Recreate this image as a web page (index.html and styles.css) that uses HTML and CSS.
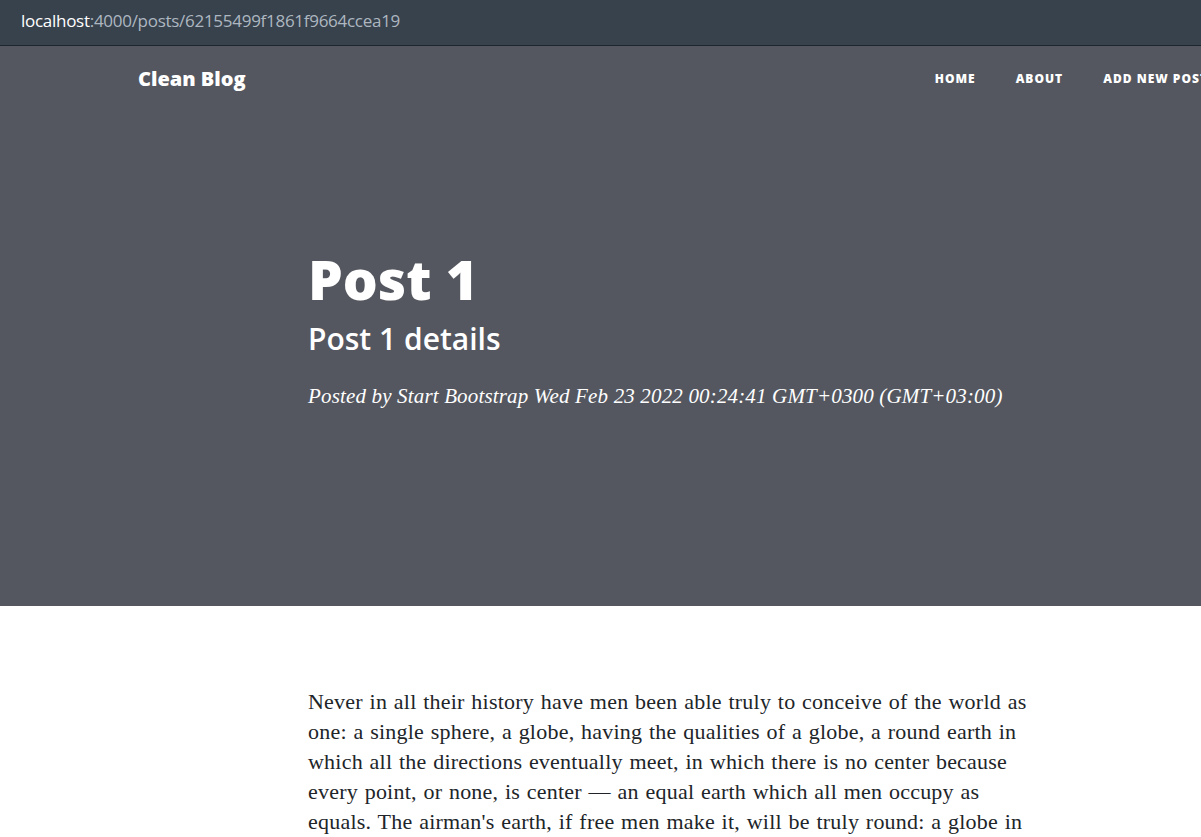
FILE: index.html
```html
<!DOCTYPE html>
<html lang="en">
<head>
<meta charset="utf-8">
<title>Post 1 - Clean Blog</title>
<link rel="stylesheet" href="styles.css">
</head>
<body>
<div class="page">
  <div class="addressbar">
    <span class="host">localhost</span><span class="path">:4000/posts/62155499f1861f9664ccea19</span>
  </div>
  <header class="masthead">
    <nav class="navbar">
      <a class="brand" href="#">Clean Blog</a>
      <ul class="nav-list">
        <li><a class="nav-link" href="#">Home</a></li>
        <li><a class="nav-link" href="#">About</a></li>
        <li><a class="nav-link" href="#">Add New Post</a></li>
      </ul>
    </nav>
    <div class="post-heading">
      <h1>Post 1</h1>
      <h2 class="subheading">Post 1 details</h2>
      <span class="meta">Posted by Start Bootstrap Wed Feb 23 2022 00:24:41 GMT+0300 (GMT+03:00)</span>
    </div>
  </header>
  <article class="article">
    <p>Never in all their history have men been able truly to conceive of the world as one: a single sphere, a globe, having the qualities of a globe, a round earth in which all the directions eventually meet, in which there is no center because every point, or none, is center — an equal earth which all men occupy as equals. The airman's earth, if free men make it, will be truly round: a globe in practice, not in theory.</p>
  </article>
</div>
</body>
</html>
```

FILE: styles.css
```css
html, body {
  margin: 0;
  padding: 0;
  background: #ffffff;
}

.page {
  width: 1201px;
  overflow: hidden;
  min-height: 837px;
}

.addressbar {
  background: #37424d;
  border-bottom: 1px solid #1d252e;
  box-sizing: border-box;
  height: 46px;
  padding-left: 21px;
  font-family: "Open Sans", "Noto Sans", sans-serif;
  font-size: 17px;
  line-height: 41px;
  letter-spacing: -0.28px;
}

.host {
  color: #ffffff;
}

.path {
  color: #aeb7c0;
}

.masthead {
  background: #54575f;
  height: 560px;
  color: #ffffff;
}

.navbar {
  display: flex;
  align-items: center;
  justify-content: space-between;
  width: 1090px;
  height: 64px;
  margin-left: 138px;
  margin-bottom: 2px;
}

.brand {
  color: #ffffff;
  text-decoration: none;
  font-family: "Open Sans", sans-serif;
  font-weight: 800;
  font-size: 20px;
}

.nav-list {
  display: flex;
  list-style: none;
  margin: 0;
  padding: 0;
}

.nav-link {
  display: block;
  padding: 0 20px;
  color: #ffffff;
  text-decoration: none;
  text-transform: uppercase;
  font-family: "Open Sans", sans-serif;
  font-weight: 800;
  font-size: 12px;
  letter-spacing: 1px;
}

.post-heading {
  margin-left: 308px;
  padding-top: 134px;
}

.post-heading h1 {
  margin: 0;
  font-family: "Open Sans", sans-serif;
  font-weight: 800;
  font-size: 55px;
  line-height: 66px;
}

.subheading {
  margin: 10px 0 30px;
  font-family: "Open Sans", sans-serif;
  font-weight: 600;
  font-size: 30px;
  line-height: 33px;
}

.meta {
  display: block;
  font-family: "Liberation Serif", serif;
  font-style: italic;
  font-size: 21px;
  letter-spacing: 0.16px;
  line-height: 30px;
  margin-top: -4px;
}

.article {
  margin-left: 308px;
  width: 725px;
  padding-top: 81px;
}

.article p {
  margin: 0;
  font-family: "Liberation Serif", serif;
  font-size: 22px;
  letter-spacing: 0.22px;
  word-spacing: 1px;
  line-height: 30px;
  color: #212529;
}
```
